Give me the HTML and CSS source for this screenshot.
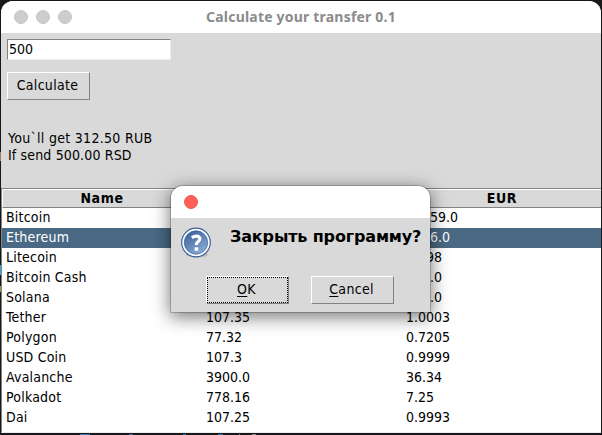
FILE: index.html
```html
<!DOCTYPE html>
<html lang="en">
<head>
<meta charset="utf-8">
<title>Calculate your transfer 0.1</title>
<link rel="stylesheet" href="styles.css">
</head>
<body>
<main class="window">
  <header class="titlebar"><div class="lights"><i></i><i></i><i></i></div><h1>Calculate your transfer 0.1</h1></header>
  <section class="form">
    <div class="entry num">500</div>
    <div class="button calc">Calculate</div>
    <p class="result">You`ll get 312.50 RUB<br><span class="sent">If send 500.00 RSD</span></p>
  </section>
  <section class="tree">
    <div class="head"><span class="name">Name</span><span></span><span>EUR</span></div>
    <div class="row"><span>Bitcoin</span><span></span><span class="num under">59.0</span></div>
    <div class="row selected"><span>Ethereum</span><span></span><span class="num under">6.0</span></div>
    <div class="row"><span>Litecoin</span><span></span><span class="num under-short">98</span></div>
    <div class="row"><span>Bitcoin Cash</span><span></span><span class="num under">.0</span></div>
    <div class="row"><span>Solana</span><span></span><span class="num under">.0</span></div>
    <div class="row"><span>Tether</span><span class="num">107.35</span><span class="num">1.0003</span></div>
    <div class="row"><span>Polygon</span><span class="num">77.32</span><span class="num">0.7205</span></div>
    <div class="row"><span>USD Coin</span><span class="num">107.3</span><span class="num">0.9999</span></div>
    <div class="row"><span>Avalanche</span><span class="num">3900.0</span><span class="num">36.34</span></div>
    <div class="row"><span>Polkadot</span><span class="num">778.16</span><span class="num">7.25</span></div>
    <div class="row"><span>Dai</span><span class="num">107.25</span><span class="num">0.9993</span></div>
  </section>
</main>
<section class="dialog">
  <header class="dialog-title"><i class="close"></i></header>
  <div class="message">
    <svg class="question" width="32" height="32" viewBox="0 0 32 32">
      <defs><linearGradient id="blue" x1="0" y1="0" x2=".6" y2="1"><stop offset="0" stop-color="#355996"/><stop offset="1" stop-color="#86a9d2"/></linearGradient></defs>
      <ellipse cx="17" cy="27.5" rx="11" ry="3" fill="#aaa" opacity=".7"/>
      <circle cx="16" cy="15.5" r="14.3" fill="#fff" stroke="#3c619c" stroke-width="1.2"/>
      <circle cx="16" cy="15.5" r="11.7" fill="url(#blue)" stroke="#38609c" stroke-width=".7"/>
      <path d="M11.8 10.6Q15.5 8.4 18.5 9.6Q21.2 11.5 18.7 14Q16.3 15.6 16.3 18" fill="none" stroke="#fff" stroke-width="3.2"/>
      <path d="M14.6 20.2h3.6v3.6h-3.6z" fill="#fff"/>
    </svg>
    <strong>Закрыть программу?</strong>
  </div>
  <div class="actions"><div class="button ok"><u>O</u>K</div><div class="button"><u>C</u>ancel</div></div>
</section>
<svg class="edge" width="602" height="435" viewBox="0 0 602 435">
  <path d="M0 152h1v9H0z" fill="#a87c60"/><path d="M0 265h1v10H0z" fill="#3ba3d7"/><path d="M0 286h1v6H0z" fill="#8c9a4e"/>
  <path d="M80 434h10v1H80zM129 434h4v1h-4zM183 434h3v1h-3zM218 434h5v1h-5z" fill="#3472b4"/>
  <path d="M239 434h1v1h-1zM252 434h4v1h-4z" fill="#888"/>
</svg>
</body>
</html>
```
FILE: styles.css
```css
* { box-sizing: border-box; }
body { margin: 0; padding: 1px 1px 2px; width: 602px; height: 435px; overflow: hidden; background: #18181a; color: #000; font: 14px/17px "DejaVu Sans Condensed", "DejaVu Sans", sans-serif; font-stretch: condensed; letter-spacing: .3px; }
.window { height: 432px; background: #d9d9d9; border-radius: 12px 12px 0 0; overflow: hidden; display: flex; flex-direction: column; }
.titlebar { height: 32px; background: #fff; display: grid; grid-template-columns: 100px 1fr 100px; align-items: center; }
.lights { display: flex; gap: 8px; padding-left: 13px; }
.lights i { width: 14px; height: 14px; border-radius: 50%; background: #cdcdcd; border: 1px solid #c5c5c5; }
h1 { margin: 0; text-align: center; font: bold 14px/20px "Noto Sans", sans-serif; letter-spacing: .2px; color: #8b8b8b; white-space: nowrap; }
.form { height: 155px; padding: 6px; }
.entry { width: 164px; height: 21px; background: #fff; border: 1px solid; border-color: #828282 #ededed #ededed #828282; padding: 1px; }
.button { width: 83px; height: 28px; border: 1px solid; border-color: #fff #828282 #828282 #fff; display: flex; justify-content: center; padding-top: 4px; }
.calc { margin-top: 12px; padding-right: 2px; }
.result { margin: 30px 1px 0; }
.sent { letter-spacing: .15px; }
.tree { flex: 1; background: #fff; border: 1px solid #828282; border-width: 1px 0 1px 1px; border-bottom-color: #ededed; }
.head, .row { display: grid; grid-template-columns: 200px 200px 1fr; }
.head { height: 19px; background: #d9d9d9; border-top: 1px solid #fff; border-bottom: 1px solid #828282; border-left: 1px solid #fff; text-align: center; font-weight: bold; letter-spacing: .6px; }
.name { padding-right: 2px; }
.row { height: 20px; line-height: 19px; padding-left: 4px; letter-spacing: .2px; }
.num { letter-spacing: 0; }
.under { padding-left: 24px; }
.under-short { padding-left: 20px; }
.selected { background: #4a6984; color: #fff; }
.dialog { position: absolute; left: 171px; top: 186px; width: 259px; height: 126px; background: #d9d9d9; border-radius: 12px 12px 0 0; box-shadow: 0 0 0 1px #0003, 0 4px 18px 1px #0008; overflow: hidden; }
.dialog-title { height: 32px; background: #fff; padding: 9px 13px; }
.close { display: block; width: 14px; height: 14px; border-radius: 50%; background: #ff5f57; border: 1px solid #ee5b54; }
.message { height: 58px; display: flex; padding: 9px 0 0 9px; }
.message strong { margin-left: 18px; font: bold 16px/20px "DejaVu Sans", sans-serif; font-stretch: normal; letter-spacing: -.15px; white-space: nowrap; }
.actions { display: flex; gap: 22px; padding-left: 35px; }
.actions u { text-underline-offset: 2px; text-decoration-thickness: 1px; text-decoration-skip-ink: none; }
.actions .button { display: block; text-align: center; padding-right: 2px; }
.ok { outline: 1px dotted #000; outline-offset: -2px; }
.edge { position: absolute; left: 0; top: 0; pointer-events: none; }
```
